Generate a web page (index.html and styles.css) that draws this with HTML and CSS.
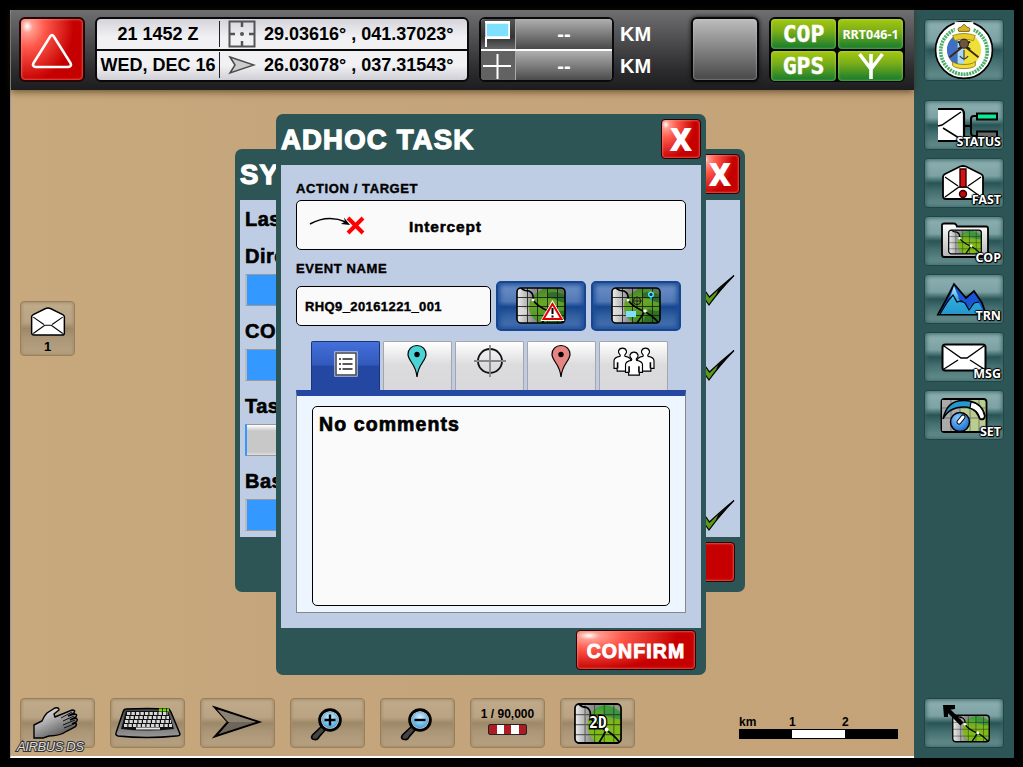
FILE: index.html
```html
<!DOCTYPE html>
<html lang="en">
<head>
<meta charset="utf-8">
<title>Adhoc Task</title>
<link rel="stylesheet" href="styles.css">
</head>
<body>
<svg class="defs" width="0" height="0" aria-hidden="true">
  <defs>
    <linearGradient id="g-gray" x1="0" y1="0" x2="1" y2="0"><stop offset="0" stop-color="#f4f4f4"/><stop offset="0.35" stop-color="#8e8e8e"/><stop offset="1" stop-color="#777"/></linearGradient>
    <linearGradient id="g-green" x1="0" y1="0" x2="0.3" y2="1"><stop offset="0" stop-color="#3c7f2a"/><stop offset="0.45" stop-color="#69a823"/><stop offset="1" stop-color="#3f8d22"/></linearGradient>
    <linearGradient id="g-lime" x1="0" y1="0" x2="0" y2="1"><stop offset="0" stop-color="#33993f"/><stop offset="0.4" stop-color="#7fb51c"/><stop offset="1" stop-color="#7cc217"/></linearGradient>
    <linearGradient id="g-hand" x1="0" y1="0" x2="0.7" y2="1"><stop offset="0" stop-color="#fff"/><stop offset="0.3" stop-color="#c9c9c9"/><stop offset="1" stop-color="#4a4a4a"/></linearGradient>
    <linearGradient id="g-keys" x1="0" y1="0" x2="0" y2="1"><stop offset="0" stop-color="#444"/><stop offset="1" stop-color="#999"/></linearGradient>
    <radialGradient id="g-lens" cx="0.5" cy="0.35" r="0.7"><stop offset="0" stop-color="#d9f2ff"/><stop offset="1" stop-color="#2b9fe6"/></radialGradient>
    <linearGradient id="g-peak" x1="0" y1="0" x2="0" y2="1"><stop offset="0" stop-color="#bfefff"/><stop offset="0.5" stop-color="#2fa9dc"/><stop offset="1" stop-color="#2497cd"/></linearGradient>
    <linearGradient id="g-folder" x1="0" y1="0" x2="0" y2="1"><stop offset="0" stop-color="#fff"/><stop offset="1" stop-color="#b5b5b5"/></linearGradient>
    <radialGradient id="g-knob" cx="0.4" cy="0.3" r="0.8"><stop offset="0" stop-color="#8cc8ff"/><stop offset="1" stop-color="#0d62c9"/></radialGradient>
    <clipPath id="c-map"><rect x="1" y="1" width="48" height="35" rx="4"/></clipPath>
    <clipPath id="c-seal"><circle cx="29" cy="29" r="16.5"/></clipPath>
  </defs>
  <symbol id="map" viewBox="0 0 50 37">
    <g clip-path="url(#c-map)">
      <rect width="50" height="37" fill="url(#g-gray)"/>
      <rect x="26" width="24" height="37" fill="#5c7450"/>
      <ellipse cx="33" cy="20" rx="20" ry="18" fill="url(#g-green)"/>
      <path d="M31 6q14-3 19 4v6q-8-1-11-4-4-1-8-1z" fill="#2f6e2c"/>
      <path d="M38 22q8 4 12 0v15H31z" fill="#27641f" opacity=".7"/>
      <path d="M0 22q6-3 12 1v4H0z" fill="#ddd" opacity=".7"/>
      <path d="M11.500 0v37M21.500 0v37M31.500 0v37M41.500 0v37M0 10.500h50M0 19.500h50M0 28.500h50" stroke="#1b1b1b" stroke-width="1" fill="none" opacity=".85"/>
      <path d="M5 1q3 3 8 3 5 2 4 9 4 6 15 11 8 3 16 12M34 24q-3 5-8 12" fill="none" stroke="#000" stroke-width="1.600"/>
      <circle cx="17" cy="13" r="1.500" fill="#fff"/><circle cx="34" cy="24" r="1.800" fill="#fff"/>
    </g>
    <rect x="1" y="1" width="48" height="35" rx="4" fill="none" stroke="#000" stroke-width="1.600"/>
  </symbol>
  <symbol id="mapLime" viewBox="0 0 50 37">
    <g clip-path="url(#c-map)">
      <rect width="50" height="37" fill="url(#g-gray)"/>
      <rect x="28" width="22" height="37" fill="#8d9a86"/>
      <ellipse cx="33" cy="20" rx="19" ry="18" fill="url(#g-lime)"/>
      <path d="M31 6q14-3 19 4v5q-8-1-19-4z" fill="#3f9440"/>
      <path d="M11.500 0v37M21.500 0v37M31.500 0v37M41.500 0v37M0 10.500h50M0 19.500h50M0 28.500h50" stroke="#1b1b1b" stroke-width="1" fill="none" opacity=".6"/>
      <path d="M5 1q3 3 8 3 5 2 4 9 4 6 15 11 8 3 16 12M34 24q-3 5-8 12" fill="none" stroke="#000" stroke-width="1.700"/>
      <circle cx="17" cy="13" r="1.800" fill="#fff"/><circle cx="34" cy="24" r="2" fill="#fff"/>
    </g>
    <rect x="1" y="1" width="48" height="35" rx="4" fill="none" stroke="#000" stroke-width="1.800"/>
  </symbol>
  <symbol id="openMail" viewBox="0 0 44 36">
    <path d="M2 12Q2 10 4 9L19 1.500Q22 .5 25 1.500L40 9Q42 10 42 12V31Q42 34 39 34H5Q2 34 2 31Z" fill="#fff" stroke="#000" stroke-width="1.800"/>
    <path d="M4 12L17 21M40 12L27 21M4 32L18 22H26L40 32" fill="none" stroke="#000" stroke-width="1.300"/>
  </symbol>
  <symbol id="check" viewBox="0 0 40 34">
    <path d="M2 14L6 11 14.500 23Q26 12 39 1.500 24 17 14 31Z" fill="#5a9a16" stroke="#000" stroke-width="1.200"/>
    <path d="M23 16L39 1 21 21Z" fill="#000"/>
  </symbol>
  <symbol id="pin" viewBox="0 0 22 34">
    <path d="M11 1.500C5.500 1.500 2 5.500 2 10.300 2 17 10 20 11 33 12 20 20 17 20 10.300 20 5.500 16.500 1.500 11 1.500Z" stroke="#000" stroke-width="1.200"/>
    <circle cx="11" cy="10.500" r="2.700" fill="#000"/>
  </symbol>
  <symbol id="person" viewBox="0 0 22 28">
    <path d="M8.500 9Q6 6.500 6.500 4.500 7.500 1.200 11 1.200T15.500 4.500Q16 6.500 13.500 9L14 10.500Q20.500 11.500 20.500 15.500V24H17V27H5V24H1.500V15.500Q1.500 11.500 8 10.500Z" fill="#fff" stroke="#000" stroke-width="1.300"/>
    <path d="M5.500 17V24M16.500 17V24" stroke="#000" stroke-width="1.800"/>
  </symbol>
  <symbol id="lens" viewBox="0 0 32 34">
    <path d="M13 18L2.500 28Q0 32 4.500 32.500 8 33 9 30L16 22Z" fill="#444" stroke="#000" stroke-width="1.600"/>
    <circle cx="20" cy="13" r="10.300" fill="#fff" stroke="#000" stroke-width="3"/>
    <circle cx="20" cy="13" r="8" fill="url(#g-lens)" stroke="#888" stroke-width=".6"/>
  </symbol>
</svg>

<div class="screen">
  <main class="main">
    <header class="topbar">
      <button class="alert red">
        <svg width="62" height="61" viewBox="0 0 62 61"><path d="M29.500 17Q31 15 32.500 17L49.500 44Q51 47.500 47.500 48H14.500Q11 47.500 12.500 44Z" fill="none" stroke="#fff" stroke-width="2.600"/></svg>
      </button>
      <div class="info">
        <div class="info-row"><span class="date">21 1452 Z</span>
          <svg class="info-icon" width="28" height="28" viewBox="0 0 28 28"><rect x="1.500" y="1.500" width="25" height="25" fill="none" stroke="#555" stroke-width="2"/><path d="M14 2v5M14 21v5M2 14h5M21 14h5" stroke="#555" stroke-width="2.500"/><circle cx="14" cy="14" r="2" fill="#555"/></svg>
          <span class="coord">29.03616° , 041.37023°</span></div>
        <div class="info-row"><span class="date wide">WED, DEC 16</span>
          <svg class="info-icon" width="28" height="28" viewBox="0 0 28 28"><path d="M2 6L26 14 2 22 7 14Z" fill="#ccc" stroke="#4a4a4a" stroke-width="1.500"/></svg>
          <span class="coord">26.03078° , 037.31543°</span></div>
      </div>
      <div class="range">
        <div class="range-row"><svg class="range-icon" width="34" height="30" viewBox="0 0 34 30"><path d="M4 3h24v16H5v9" fill="none" stroke="#fff" stroke-width="2"/><path d="M5 4h23v14H5z" fill="#7fdfff" stroke="#fff" stroke-width="1.500"/></svg><span>--</span></div>
        <div class="range-row"><svg class="range-icon" width="34" height="30" viewBox="0 0 34 30"><path d="M2 15h28M16.500 3v25" stroke="#fff" stroke-width="2"/></svg><span>--</span></div>
      </div>
      <div class="units"><span>KM</span><span>KM</span></div>
      <div class="blank"></div>
      <div class="links">
        <span class="led">COP</span><span class="led small">RRT046-1</span>
        <span class="led">GPS</span><span class="led"><svg width="30" height="28" viewBox="0 0 30 28"><path d="M3.500 2L15 17 26.500 2M15 2v25" fill="none" stroke="#fff" stroke-width="3.600"/></svg></span>
      </div>
    </header>

    <section class="map">
      <div class="tile">
        <svg width="36" height="30"><use href="#openMail" width="36" height="30"/></svg>
        <span>1</span>
      </div>

      <section class="dialog system">
        <div class="dialog-head"><h2>SY</h2><button class="close red">X</button></div>
        <div class="dialog-body">
          <h3>Las</h3>
          <h3>Dire</h3>
          <div class="status"><i class="bar full"></i><svg width="40" height="34"><use href="#check"/></svg></div>
          <h3>CO</h3>
          <div class="status"><i class="bar full"></i><svg width="40" height="34"><use href="#check"/></svg></div>
          <h3>Tas</h3>
          <div class="status"><i class="bar"></i></div>
          <h3>Bas</h3>
          <div class="status"><i class="bar full"></i><svg width="40" height="34"><use href="#check"/></svg></div>
        </div>
        <div class="dialog-foot"><button class="action red"></button></div>
      </section>

      <section class="dialog task">
        <div class="dialog-head"><h2>ADHOC TASK</h2><button class="close red">X</button></div>
        <div class="dialog-body">
          <label class="caption">ACTION / TARGET</label>
          <div class="field target">
            <svg width="62" height="24" viewBox="0 0 62 24"><path d="M2 11Q20 1 38 9" fill="none" stroke="#000" stroke-width="1.500"/><path d="M42 12L33 11 37 8.500 36 4.500Z"/><path d="M40 5L55 20M55 5L40 20" stroke="#f00" stroke-width="4"/></svg>
            <span>Intercept</span>
          </div>
          <label class="caption">EVENT NAME</label>
          <div class="event">
            <div class="field name">RHQ9_20161221_001</div>
            <button class="blue"><svg width="50" height="38" viewBox="0 0 50 38"><use href="#map" width="50" height="37"/><path d="M36.500 16L46 32.500H27Z" fill="#fff" stroke="#fff" stroke-width="3"/><path d="M36.500 17L45.500 32H27.500Z" fill="#fff" stroke="#e30000" stroke-width="2"/><path d="M36.500 21v6M36.500 28.500v2" stroke="#000" stroke-width="2"/></svg></button>
            <button class="blue"><svg width="50" height="38" viewBox="0 0 50 38"><use href="#map" width="50" height="37"/><circle cx="26" cy="14" r="3.500" fill="none" stroke="#222" stroke-width="1.200"/><path d="M26 9v10M21 14h10" stroke="#222"/><path d="M15 24h10v6H15z" fill="#7fdfff"/><path d="M40 14V10" stroke="#14b5c9" stroke-width="1.500"/><circle cx="40" cy="7.500" r="2.300" fill="#126" stroke="#4fe3f0" stroke-width="1.500"/></svg></button>
          </div>
          <nav class="tabs">
            <button class="tab active"><svg width="24" height="26" viewBox="0 0 24 26"><rect x="2" y="2" width="20" height="22" fill="#fff" stroke="#4b4b4b" stroke-width="1.600"/><rect x=".8" y=".8" width="22.400" height="24.400" fill="none" stroke="#d9dbe4" stroke-width=".8"/><path d="M8.500 8h10M8.500 13h10M8.500 18h10" stroke="#222" stroke-width="1.600"/><path d="M5 8h2M5 13h2M5 18h2" stroke="#222" stroke-width="1.600"/></svg></button>
            <button class="tab pin"><svg class="teal" width="22" height="34"><use href="#pin"/></svg></button>
            <button class="tab"><svg width="34" height="34" viewBox="0 0 34 34"><circle cx="17" cy="17" r="12" fill="none" stroke="#111" stroke-width="1.800"/><path d="M17 1v32M1 17h32" stroke="#888" stroke-width="1.800"/></svg></button>
            <button class="tab pin"><svg class="rose" width="22" height="34"><use href="#pin"/></svg></button>
            <button class="tab"><svg width="46" height="34" viewBox="0 0 46 34"><use href="#person" x="0.500" y="3" width="22" height="25" preserveAspectRatio="none"/><use href="#person" x="23.500" y="3" width="22" height="25" preserveAspectRatio="none"/><use href="#person" x="12" y="7" width="22" height="25" preserveAspectRatio="none"/></svg></button>
          </nav>
          <div class="panel"><div class="comments">No comments</div></div>
        </div>
        <div class="dialog-foot"><button class="action red">CONFIRM</button></div>
      </section>

      <footer class="tools">
        <button class="tool"><svg width="75" height="50" viewBox="0 0 75 50"><path d="M14 27L22 23Q24 18 27 15L35 10Q39 9 39 12L34 16 35 19 52 12Q56 12 54 15L48 18 54 16Q58 16 56 19L50 22 55 20Q59 21 56 24L52 26 55 25Q58 26 55 29L47 33Q40 38 29 38L23 40H14Z" fill="url(#g-hand)" stroke="#000" stroke-width="1.400"/><path d="M52 14L41 20M54 18L43 23M55 22L43 27M54 26L44 30" stroke="#111" stroke-width="1"/></svg></button>
        <button class="tool"><svg width="75" height="50" viewBox="0 0 75 50"><path d="M16 11Q37 10 59 11L61 14 70 36Q70 38 66 38 37 41 8 38 5 37 6 35L13 14Q14 11 16 11Z" fill="url(#g-keys)" stroke="#000" stroke-width="1.400"/><path d="M16 13H58L64 31Q37 34 11 31Z" fill="#111"/><path d="M17 15.500H58M16 19.500H59M15 23.500H61M14 27.500H62" stroke="#d8d8d8" stroke-width="3" stroke-dasharray="3.300 1.200"/><path d="M26 30.500H50" stroke="#e8e8e8" stroke-width="2"/><path d="M49 12h10" stroke="#72d600" stroke-width="3" stroke-dasharray="3 1"/></svg></button>
        <button class="tool"><svg width="75" height="50" viewBox="0 0 75 50"><path d="M15 9.500L59 24 15 38.500 28 24Z" fill="#6e6659" stroke="#000" stroke-width="2"/><path d="M17 11.500L28 24H56Z" fill="#8b8271"/></svg></button>
        <button class="tool mag"><svg width="32" height="34"><use href="#lens"/><path d="M14.500 13h11M20 7.500v11" stroke="#000" stroke-width="2.400"/></svg></button>
        <button class="tool mag"><svg width="32" height="34"><use href="#lens"/><path d="M14.500 13h11" stroke="#000" stroke-width="2.400"/></svg></button>
        <button class="tool zoomlevel"><span>1 / 90,000</span><i class="stripes"></i></button>
        <button class="tool flat"><svg width="48" height="41" viewBox="0 0 50 37" preserveAspectRatio="none"><use href="#mapLime" width="50" height="37"/><text class="two-d" x="16" y="23">2D</text></svg></button>
        <div class="scale">
          <div class="ticks"><span>km</span><span>1</span><span>2</span></div>
          <div class="ruler"><i></i><i></i><i></i></div>
        </div>
      </footer>
      <span class="brand">AIRBUS DS</span>
    </section>
  </main>

  <aside class="side">
    <button class="sbtn seal">
      <svg width="60" height="60" viewBox="0 0 58 58"><circle cx="29" cy="29" r="27.500" fill="#fff" stroke="#000" stroke-width="1.600"/><circle cx="29" cy="30" r="22.500" fill="none" stroke="#4fae6c" stroke-width="3.500" stroke-dasharray="2 .8"/><path d="M20 2h18v10H20z" fill="#fff"/>
        <g clip-path="url(#c-seal)"><path d="M12 12h34v34H12z" fill="#efdf38"/><path d="M12 12h11v34H12z" fill="#3d6fc7"/><path d="M23 12h6v34h-6z" fill="#a9d8f5"/></g>
        <path d="M18 15Q29 11 40 15L38 20Q29 17 20 20Z" fill="#e6cc28" stroke="#7c6a10" stroke-width=".6"/>
        <path d="M24 11q-2-4 2-4l3-3 3 3q4 0 2 4z" fill="#d9b71d" stroke="#4b3c08" stroke-width=".7"/>
        <path d="M15 36L34 21M43 36L24 21" stroke="#432411" stroke-width="1.800"/><path d="M23 21l12 7M35 21l-12 7" stroke="#222" stroke-width="1.600"/>
        <circle cx="29" cy="23" r="4.300" fill="#70533d" stroke="#222"/><path d="M29 29v10M25 35q4 5 8 0" fill="none" stroke="#444" stroke-width="1.200"/>
        <path d="M18 40q3 3 11 3t11-3v4q-3 3-11 3t-11-3z" fill="#f0dc30" stroke="#74630f" stroke-width=".7"/></svg>
    </button>
    <button class="sbtn"><svg width="80" height="50" viewBox="0 0 80 50"><path d="M14 9H37L40 14V36L38 40H14Z" fill="#fff"/><path d="M14 9H37Q40 10 40 14V37Q39 40 37 41H14" fill="none" stroke="#000" stroke-width="2.200"/><path d="M14 26L18 25 37 12M19 28L35 38" fill="none" stroke="#000" stroke-width="1.500"/><path d="M41 26H47M53 16H50Q47 16 47 19V33Q47 36 50 36H53" fill="none" stroke="#000" stroke-width="2"/><path d="M53 13.500H73V19.500H53Z" fill="#0ceb91" stroke="#000" stroke-width="2"/><path d="M53 31.500H73V38H53Z" fill="#686868" stroke="#000" stroke-width="2"/></svg><b>STATUS</b></button>
    <button class="sbtn"><svg width="80" height="50" viewBox="0 0 80 50"><use href="#openMail" x="16" y="7" width="46" height="36"/><path d="M36 11H42V29H36Z" fill="#d31313" stroke="#300" stroke-width="1.400"/><circle cx="39" cy="36" r="3.500" fill="#b80c0c" stroke="#300" stroke-width="1.400"/></svg><b>FAST</b></button>
    <button class="sbtn"><svg width="80" height="50" viewBox="0 0 80 50"><path d="M18 9Q18 7.500 20 7.500H30Q32 7.500 33 10.500H62Q64 10.500 64 12.500V39Q64 41 61 41H20Q18 41 18 38Z" fill="url(#g-folder)" stroke="#000" stroke-width="1.800"/><use href="#mapLime" x="24" y="13" width="34" height="26" preserveAspectRatio="none"/></svg><b>COP</b></button>
    <button class="sbtn"><svg width="80" height="50" viewBox="0 0 80 50"><path d="M14 40.500L22 26 30 10 42 24 50 17 58 29 62 40.500Z" fill="#1953d6" stroke="#000" stroke-width="1.800"/><path d="M15 40L25 27 30 12 35 24 33 22 37 29 40 27 44 35 50 28 54 28 61 40Z" fill="url(#g-peak)"/><path d="M16 40L24 27 29 21 33 28 37 27 41 29 45 36 50 29 55 28" fill="none" stroke="#000" stroke-width="1.200"/></svg><b>TRN</b></button>
    <button class="sbtn"><svg width="80" height="50" viewBox="0 0 80 50"><rect x="18.500" y="12.500" width="43" height="26" rx="3" fill="#fff" stroke="#000" stroke-width="2"/><path d="M20 14L37 26H43L60 14M20 37L34 28M60 37L46 28" fill="none" stroke="#000" stroke-width="1.400"/></svg><b>MSG</b></button>
    <button class="sbtn"><svg width="80" height="50" viewBox="0 0 80 50"><rect x="17.500" y="9" width="45" height="33" rx="3" fill="#b9cd8e" stroke="#000" stroke-width="1.800"/><path d="M18 10h18v31H18z" fill="#aaa"/><path d="M27 10v31M36 10v31M46 10v31M55 10v31M18 18h44M18 28h44" stroke="#666" stroke-width=".8"/><path d="M19 29Q23 10 40 10.500 58 11 61 26 60 31 56 29 54 25 52 22 47 17 40 17 25 17 19 29Z" fill="#2797cf" stroke="#000" stroke-width="1.500"/><path d="M47 12Q58 14 60.500 26 60 30 56 28.500 54 20 46 18Z" fill="#fff" stroke="#000" stroke-width="1.200"/><circle cx="36" cy="32" r="9.500" fill="url(#g-knob)" stroke="#000" stroke-width="1.500"/><path d="M35 32L39 27" stroke="#000" stroke-width="5" stroke-linecap="round"/><path d="M35 32L39 27" stroke="#fff" stroke-width="3" stroke-linecap="round"/></svg><b>SET</b></button>
    <button class="sbtn last"><svg width="80" height="50" viewBox="0 0 80 50"><use href="#mapLime" x="28" y="16" width="38" height="29" preserveAspectRatio="none"/><path d="M24 12L38 26" stroke="#000" stroke-width="4.500"/><path d="M19 7H31V11L24 12V19H20Z"/></svg></button>
  </aside>
</div>
</body>
</html>
```

FILE: styles.css
```css
* { box-sizing: border-box; }
body { margin: 0; background: #000; width: 1023px; height: 767px; padding: 10px 0 0 10px; overflow: hidden; font-family: "Liberation Sans", Arial, sans-serif; font-weight: bold; color: #000; }
button { font: inherit; color: inherit; border: 0; padding: 0; margin: 0; background: none; }
svg { display: block; flex: none; }
h2, h3 { margin: 0; }
.defs { position: absolute; }

.screen { display: flex; width: 1004px; height: 748px; }
.main { width: 904px; display: flex; flex-direction: column; border-left: 1px solid #999; border-bottom: 2px solid #fff; }

/* top bar */
.topbar { position: relative; z-index: 1; height: 80px; display: flex; align-items: flex-start; padding: 7px 0 0 8px; background: linear-gradient(#6f6f72, #505053 35%, #2c2c2f 75%, #1d1d1f); box-shadow: 0 2px 7px rgba(60, 40, 10, .65); }
.red { background: radial-gradient(ellipse 75% 90% at 10% 12%, #fff 0, #ff9c90 12%, #ff5a4c 38%, rgba(255, 60, 50, 0) 100%), #c60000; border: 1px solid #250505; border-radius: 4px; box-shadow: inset 0 0 2px 1px rgba(255, 150, 140, .5); color: #fff; }
.alert { width: 66px; height: 65px; border-width: 2px; border-radius: 6px; }
.info { width: 374px; height: 65px; margin-left: 10px; border: 2px solid #0a0a0a; border-radius: 6px; display: flex; flex-direction: column; gap: 2px; background: #0a0a0a; overflow: hidden; font-size: 18px; }
.info-row { flex: 1; display: flex; align-items: center; background: linear-gradient(#d3d3d9, #f1f1f4 60%, #f1f1f4); }
.info-row + .info-row { background: linear-gradient(#f1f1f4 50%, #cfcfd6); }
.date { width: 123px; height: 26px; line-height: 27px; border-right: 1px solid #222; text-align: center; white-space: nowrap; }
.info-icon { margin-left: 8px; }
.coord { margin-left: 8px; padding-top: 1px; white-space: pre; }
.range { width: 135px; height: 65px; margin-left: 10px; border: 2px solid #0a0a0a; border-radius: 6px; overflow: hidden; display: flex; flex-direction: column; gap: 2px; background: #fff; color: #fff; font-size: 20px; }
.range-row { flex: 1; display: flex; background: linear-gradient(#999, #444); }
.range-icon { width: 34px; background: linear-gradient(#555, #333 60%, #666); }
.range-row + .range-row .range-icon { background: #626262; }
.range-row span { flex: 1; text-align: center; line-height: 30px; border-left: 1px solid #aaa; background: linear-gradient(#b0b0b0, #484848); }
.units { width: 70px; margin-left: 6px; display: flex; flex-direction: column; color: #fff; font-size: 20px; line-height: 32px; padding-top: 1px; }
.blank { width: 68px; height: 65px; margin-left: 1px; border: 2px solid #080808; border-radius: 6px; background: linear-gradient(#bdbdbd, #474747); box-shadow: 0 0 4px #111, inset 0 0 2px #ccc; }
.links { width: 136px; height: 65px; margin-left: 10px; padding: 2px; border-radius: 6px; background: #050505; display: grid; grid-template-columns: 65px 65px; grid-template-rows: 30px 30px; gap: 2px; }
.led { display: flex; align-items: center; justify-content: center; border-radius: 4px; background: linear-gradient(#a4c80f, #7cae19 40%, #127a2d); box-shadow: inset 0 0 2px 1px rgba(200, 230, 120, .35); color: #fff; font: bold 23px/30px "DejaVu Sans Mono", monospace; -webkit-text-stroke: .5px; }
.led.small { font: bold 12.500px "Noto Sans", sans-serif; letter-spacing: 0; -webkit-text-stroke: 0; }

/* map */
.map { position: relative; flex: 1; background: linear-gradient(90deg, #c8a97d, #c5a57b 30%, #c4a379); display: flex; flex-direction: column; justify-content: space-between; padding: 211px 0 8px 9px; }
.tile { width: 55px; height: 55px; display: flex; flex-direction: column; align-items: center; padding-top: 5px; gap: 3px; font-size: 13px; line-height: 14px; }
.tile, .tool { border: 1px solid #98805f; border-radius: 4px; background: linear-gradient(#c0ab8b, #b9a383 38%, #9c8767 50%, #ab9778 68%, #b7a181); box-shadow: inset 0 0 3px 1px #a58d6b; }

/* dialogs */
.dialog { position: absolute; background: #2d5555; border-radius: 7px; padding: 5px; display: flex; flex-direction: column; }
.system { left: 224px; top: 59px; width: 510px; height: 443px; }
.task { left: 265px; top: 24px; width: 430px; height: 561px; }
.dialog-head { height: 46px; flex: none; display: flex; justify-content: space-between; align-items: flex-start; color: #fff; }
.dialog-head h2 { font-size: 27.500px; line-height: 41px; letter-spacing: 1.200px; -webkit-text-stroke: 1.300px; white-space: nowrap; }
.close { width: 40px; height: 40px; font: 800 31px/35px "Open Sans", sans-serif; }
.dialog-body { background: #bfcde4; flex: 1; display: flex; flex-direction: column; }
.dialog-foot { display: flex; justify-content: flex-end; padding: 2px 5px 0 0; height: 42px; flex: none; }
.system .dialog-foot { height: 50px; padding-top: 5px; }
.action { width: 120px; height: 40px; font-size: 19.500px; line-height: 40px; letter-spacing: 1.100px; -webkit-text-stroke: .9px; }
.system .action { background: #c60000; }
.system .dialog-body { padding: 0 5px; }
.system h3 { font-size: 20px; line-height: 38px; height: 37px; letter-spacing: .5px; -webkit-text-stroke: .6px; }
.status { display: flex; justify-content: space-between; height: 32px; margin-bottom: 6px; }
.bar { width: 300px; height: 32px; border: 1px solid #999; border-left: 2px solid #3398ff; background: linear-gradient(#fff, #c8c8c8 20%, #c8c8c8 90%, #e0e0e0); }
.bar.full { border-left-color: #bbb; background: #3398ff; }

.task .dialog-body { padding: 15px 15px 0; }
.caption { font-size: 13px; line-height: 17px; height: 20px; letter-spacing: .6px; -webkit-text-stroke: .4px; }
.field { background: #fafafa; border: 1px solid #000; border-radius: 5px; }
.target { height: 50px; margin-bottom: 10px; display: flex; align-items: center; padding-left: 11px; font-size: 15.500px; letter-spacing: .8px; -webkit-text-stroke: .5px; }
.target span { margin-left: 39px; padding-top: 3px; }
.event { display: flex; gap: 5px; height: 50px; align-items: center; margin-top: 1px; }
.name { width: 195px; height: 40px; padding-left: 8px; font-size: 13px; line-height: 39px; letter-spacing: .4px; -webkit-text-stroke: .4px; }
.blue { width: 90px; height: 50px; border: 2px solid #16468f; border-radius: 5px; background: linear-gradient(#7093c8, #5279b6 40%, #16468f 52%, #315f9f 70%, #4e77b4); box-shadow: inset 0 0 5px 2px #1c4c96; display: flex; align-items: center; justify-content: center; }
.tabs { display: flex; gap: 3px; padding-left: 15px; margin-top: 10px; height: 49px; }
.tab { width: 69px; height: 49px; display: flex; justify-content: center; padding-top: 2px; border: 1px solid #a5a5aa; border-bottom: 0; border-radius: 2px 2px 0 0; background: linear-gradient(#fff, #dcdcde 48%, #d8d8da); }
.tab.active { padding-top: 9px; border-color: #1d3577; background: linear-gradient(#4470da, #3259bc 48%, #2447a1 50%); }
.tab.pin { padding-right: 2px; }
.teal { fill: #4ad3d5; }
.rose { fill: #e68484; }
.panel { height: 223px; border: 1px solid #888; border-top: 6px solid #2447a1; background: #edf5ff; padding: 10px 15px 6px; }
.comments { height: 200px; background: #fafafa; border: 1px solid #000; border-radius: 5px; padding: 5px 6px; font-size: 19.500px; line-height: 24px; letter-spacing: 1.100px; -webkit-text-stroke: .7px; }

/* bottom tools */
.tools { display: flex; gap: 15px; height: 50px; }
.tool { width: 75px; height: 50px; display: flex; align-items: center; justify-content: center; }
.mag { padding-right: 3px; padding-top: 2px; }
.zoomlevel { flex-direction: column; font-size: 12px; gap: 3px; padding-bottom: 4px; }
.stripes { width: 39px; height: 11px; border: 1px solid #222; border-radius: 2px; background: repeating-linear-gradient(90deg, #ad1b25 0 7.500px, #fff 7.500px 15px); }
.two-d { font: bold 15px "DejaVu Sans Mono", monospace; fill: #fff; stroke: #000; stroke-width: 2.500px; paint-order: stroke; }
.scale { margin-left: 89px; width: 159px; padding-top: 18px; font-size: 12px; line-height: 13px; }
.ticks { display: grid; grid-template-columns: 50px 53px 56px; }
.ruler { display: flex; height: 10px; border: 1px solid #000; background: #000; }
.ruler i { flex: 1; }
.ruler i:nth-child(2) { background: #fff; }
.brand { position: absolute; left: 6px; bottom: 2px; font: italic normal 13px/14px "Liberation Sans", sans-serif; color: #ddd; -webkit-text-stroke: 2px #333; paint-order: stroke; letter-spacing: -.4px; }

/* right side */
.side { width: 100px; background: #2d5555; display: flex; flex-direction: column; gap: 8px; padding: 9px 10px 10px; }
.sbtn { position: relative; width: 80px; height: 50px; border: 1px solid #1f4546; border-radius: 4px; background: linear-gradient(#8fb1b2, #7da2a3 35%, #285455 50%, #456f70 68%, #6a9292); box-shadow: inset 0 0 4px 1px #386465; display: flex; align-items: center; justify-content: center; }
.sbtn b { position: absolute; right: 2px; bottom: 0; font: bold 12.500px/15px "Noto Sans", sans-serif; color: #fff; text-shadow: 1px 1px 1px #000, -1px 0 1px #000, 0 -1px 1px #000, 1px 0 1px #000, 0 1px 1px #000; }
.seal { height: 62px; margin-bottom: 11px; }
.last { margin-top: auto; }
```
